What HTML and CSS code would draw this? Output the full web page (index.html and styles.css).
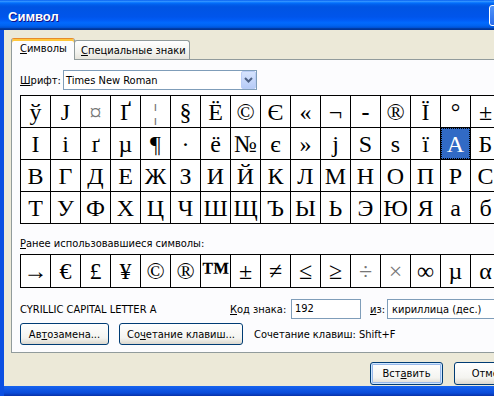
FILE: index.html
```html
<!DOCTYPE HTML>
<html>
    <head>
        <meta charset="utf-8">
        <link rel="stylesheet" href="styles.css">
    </head>
    <body>
        <div class="window">
            <div class="titlebar">
                <span class="title">Символ</span>
                <span class="help-btn"></span>
            </div>
            <div class="client">
                <div class="tabs">
                    <div class="tab tab-symbols active"><u>С</u>имволы</div>
                    <div class="tab tab-special"><u>С</u>пециальные знаки</div>
                </div>
                <div class="panel">
                    <div class="font-row">
                        <label class="font-label"><u>Ш</u>рифт:</label>
                        <div class="combo font-combo">
                            <span class="combo-text">Times New Roman</span>
                            <span class="drop">
                                <svg width="9" height="6" viewBox="0 0 9 6"><path d="M1 1 L4.5 4.5 L8 1" fill="none" stroke="#4d6185" stroke-width="2"/></svg>
                            </span>
                        </div>
                    </div>

                    <div class="grid main-grid">
                        <div class="cell">ў</div><div class="cell">Ј</div><div class="cell light">¤</div><div class="cell">Ґ</div>
                        <div class="cell light">¦</div><div class="cell">§</div><div class="cell">Ё</div><div class="cell">©</div>
                        <div class="cell">Є</div><div class="cell">«</div><div class="cell">¬</div><div class="cell hy">-</div>
                        <div class="cell">®</div><div class="cell">Ї</div><div class="cell">°</div><div class="cell">±</div>

                        <div class="cell">І</div><div class="cell">і</div><div class="cell">ґ</div><div class="cell">µ</div>
                        <div class="cell">¶</div><div class="cell">·</div><div class="cell">ё</div><div class="cell">№</div>
                        <div class="cell">є</div><div class="cell">»</div><div class="cell">ј</div><div class="cell">Ѕ</div>
                        <div class="cell">ѕ</div><div class="cell">ї</div><div class="cell selected">А</div><div class="cell">Б</div>

                        <div class="cell">В</div><div class="cell">Г</div><div class="cell">Д</div><div class="cell">Е</div>
                        <div class="cell">Ж</div><div class="cell">З</div><div class="cell">И</div><div class="cell">Й</div>
                        <div class="cell">К</div><div class="cell">Л</div><div class="cell">М</div><div class="cell">Н</div>
                        <div class="cell">О</div><div class="cell">П</div><div class="cell">Р</div><div class="cell">С</div>

                        <div class="cell">Т</div><div class="cell">У</div><div class="cell">Ф</div><div class="cell">Х</div>
                        <div class="cell">Ц</div><div class="cell">Ч</div><div class="cell">Ш</div><div class="cell">Щ</div>
                        <div class="cell">Ъ</div><div class="cell">Ы</div><div class="cell">Ь</div><div class="cell">Э</div>
                        <div class="cell">Ю</div><div class="cell">Я</div><div class="cell">а</div><div class="cell">б</div>
                    </div>

                    <div class="recent-label"><u>Р</u>анее использовавшиеся символы:</div>
                    <div class="grid recent-grid">
                        <div class="cell">→</div><div class="cell">€</div><div class="cell">£</div><div class="cell">¥</div>
                        <div class="cell">©</div><div class="cell">®</div><div class="cell tm">™</div><div class="cell">±</div>
                        <div class="cell">≠</div><div class="cell">≤</div><div class="cell">≥</div><div class="cell light">÷</div>
                        <div class="cell light">×</div><div class="cell">∞</div><div class="cell">µ</div><div class="cell">α</div>
                    </div>

                    <div class="info-row">
                        <span class="charname">CYRILLIC CAPITAL LETTER A</span>
                        <label class="code-label"><u>К</u>од знака:</label>
                        <div class="field code-field">192</div>
                        <label class="from-label"><u>и</u>з:</label>
                        <div class="combo from-combo"><span class="combo-text">кириллица (дес.)</span></div>
                    </div>

                    <div class="btn-row">
                        <button class="btn btn-auto">Ав<u>т</u>озамена...</button>
                        <button class="btn btn-keys">Со<u>ч</u>етание клавиш...</button>
                        <span class="shortcut">Сочетание клавиш: Shift+F</span>
                    </div>
                </div>

                <div class="dialog-buttons">
                    <button class="btn btn-insert default">Вст<u>а</u>вить</button>
                    <button class="btn btn-cancel">Отмена</button>
                </div>
            </div>
            <div class="frame-bottom"></div>
        </div>
    </body>
</html>
```

FILE: styles.css
```css
* {
  box-sizing: border-box;
}

html, body {
  margin: 0;
  padding: 0;
}

body {
  width: 494px;
  height: 396px;
  overflow: hidden;
  background: #ece9d8;
  font-family: "DejaVu Sans Condensed", "DejaVu Sans", sans-serif;
  font-stretch: semi-condensed;
  font-size: 11px;
  color: #000;
}

u {
  text-decoration: underline;
  text-underline-offset: 1px;
}

.window {
  width: 600px;
}

/* title bar */
.titlebar {
  height: 30px;
  display: flex;
  align-items: center;
  padding: 3px 0 0 8px;
  background: linear-gradient(to bottom, #0058ee 0%, #3593ff 4%, #288eff 6%, #127dff 8%, #036ffc 10%, #0262ee 14%, #0057e5 20%, #0054e3 24%, #0055eb 56%, #005bf5 66%, #026afe 76%, #0062ef 86%, #0052d6 92%, #0040ab 94%, #003092 100%);
}

.title {
  flex: 0 0 481px;
  color: #fff;
  font-family: "Liberation Sans", sans-serif;
  font-weight: bold;
  font-size: 13px;
  text-shadow: 1px 1px #0f1089;
}

.help-btn {
  width: 21px;
  height: 21px;
  margin-top: -2px;
  border: 1px solid #fff;
  border-radius: 3px;
  background: linear-gradient(to bottom, #4f94fb, #2a6cea);
}

/* client area */
.client {
  height: 356px;
  border-left: 4px solid #0b4fe2;
  padding: 8px 0 0 7px;
  background: #ece9d8;
}

.tabs {
  display: flex;
  align-items: flex-end;
  height: 21px;
}

.tab {
  height: 19px;
  padding: 3px 0 0 6px;
  line-height: 14px;
  border: 1px solid #919b9c;
  border-bottom: none;
  border-radius: 3px 3px 0 0;
  background: linear-gradient(to bottom, #ffffff, #f3f3ef 60%, #e6e4dc);
  white-space: nowrap;
}

.tab-symbols {
  width: 64px;
  padding-left: 8px;
}

.tab-special {
  width: 116px;
  margin-left: -1px;
}

.tab.active {
  height: 22px;
  margin-bottom: -1px;
  padding-top: 3px;
  border-top: 1px solid #e68b2c;
  box-shadow: inset 0 2px #ffc73c;
  background: #fcfcfe;
  position: relative;
  z-index: 1;
}

.panel {
  width: 560px;
  border: 1px solid #919b9c;
  background: #fcfcfe;
  padding: 10px 0 7px 8px;
}

.font-row {
  display: flex;
  align-items: center;
  height: 20px;
}

.font-label {
  width: 43px;
}

.combo {
  height: 20px;
  border: 1px solid #7f9db9;
  background: #fff;
  display: flex;
  align-items: center;
  padding-left: 2px;
}

.font-combo {
  width: 194px;
}

.combo-text {
  flex: 1;
  white-space: nowrap;
}

.drop {
  width: 15px;
  height: 18px;
  border: 1px solid #bacdf6;
  border-radius: 2px;
  background: linear-gradient(to bottom, #d6e3fd, #b6cbf7);
  display: flex;
  align-items: center;
  justify-content: center;
}

/* symbol grids */
.grid {
  display: grid;
  grid-template-columns: repeat(16, 29px);
  gap: 1px;
  width: max-content;
  background: #000;
  border: 1px solid #000;
}

.main-grid {
  margin-top: 5px;
  grid-auto-rows: 31px;
}

.recent-grid {
  margin-top: 4px;
  grid-auto-rows: 32px;
}

.cell {
  background: #fff;
  display: flex;
  align-items: center;
  justify-content: center;
  font-family: "Liberation Serif", "DejaVu Serif", serif;
  font-size: 24px;
  line-height: 1;
}

.cell.hy {
  font-weight: bold;
}

.cell.light {
  color: #777;
}

.cell.tm {
  font-size: 28px;
  font-weight: bold;
  padding-top: 2px;
}

.cell.selected {
  background: #316ac5;
  color: #fff;
  outline: 1px dotted #000;
  outline-offset: -1px;
}

.recent-label {
  margin-top: 13px;
  line-height: 13px;
}

.info-row {
  margin-top: 11px;
  display: flex;
  align-items: center;
  height: 20px;
}

.charname {
  width: 210px;
}

.code-label {
  width: 61px;
}

.field {
  height: 20px;
  border: 1px solid #7f9db9;
  background: #fff;
  padding: 2px 0 0 3px;
}

.code-field {
  width: 70px;
}

.from-label {
  width: 17px;
  margin-left: 9px;
}

.from-combo {
  width: 160px;
  padding-left: 4px;
}

.btn-row {
  margin-top: 4px;
  display: flex;
  align-items: center;
  height: 22px;
}

.btn {
  height: 22px;
  padding: 0;
  font: inherit;
  color: #000;
  border: 1px solid #003c74;
  border-radius: 3px;
  background: linear-gradient(to bottom, #ffffff, #f4f4f0 70%, #dcd8ce);
  white-space: nowrap;
}

.btn-auto {
  width: 89px;
  margin-right: 10px;
}

.btn-keys {
  width: 124px;
  margin-right: 11px;
}

.dialog-buttons {
  display: flex;
  margin-top: 9px;
  padding-left: 359px;
}

.dialog-buttons .btn {
  height: 23px;
}

.btn-insert {
  width: 73px;
  margin-right: 11px;
}

.btn-cancel {
  width: 75px;
}

.btn.default {
  box-shadow: inset 0 0 0 1px #cee7ff, inset 0 0 0 2px #98b8ea;
}

.frame-bottom {
  height: 10px;
  border-left: 4px solid #0b4fe2;
  background: linear-gradient(to bottom, #1663ef, #0a4bd9 70%, #0831a8);
}
```
